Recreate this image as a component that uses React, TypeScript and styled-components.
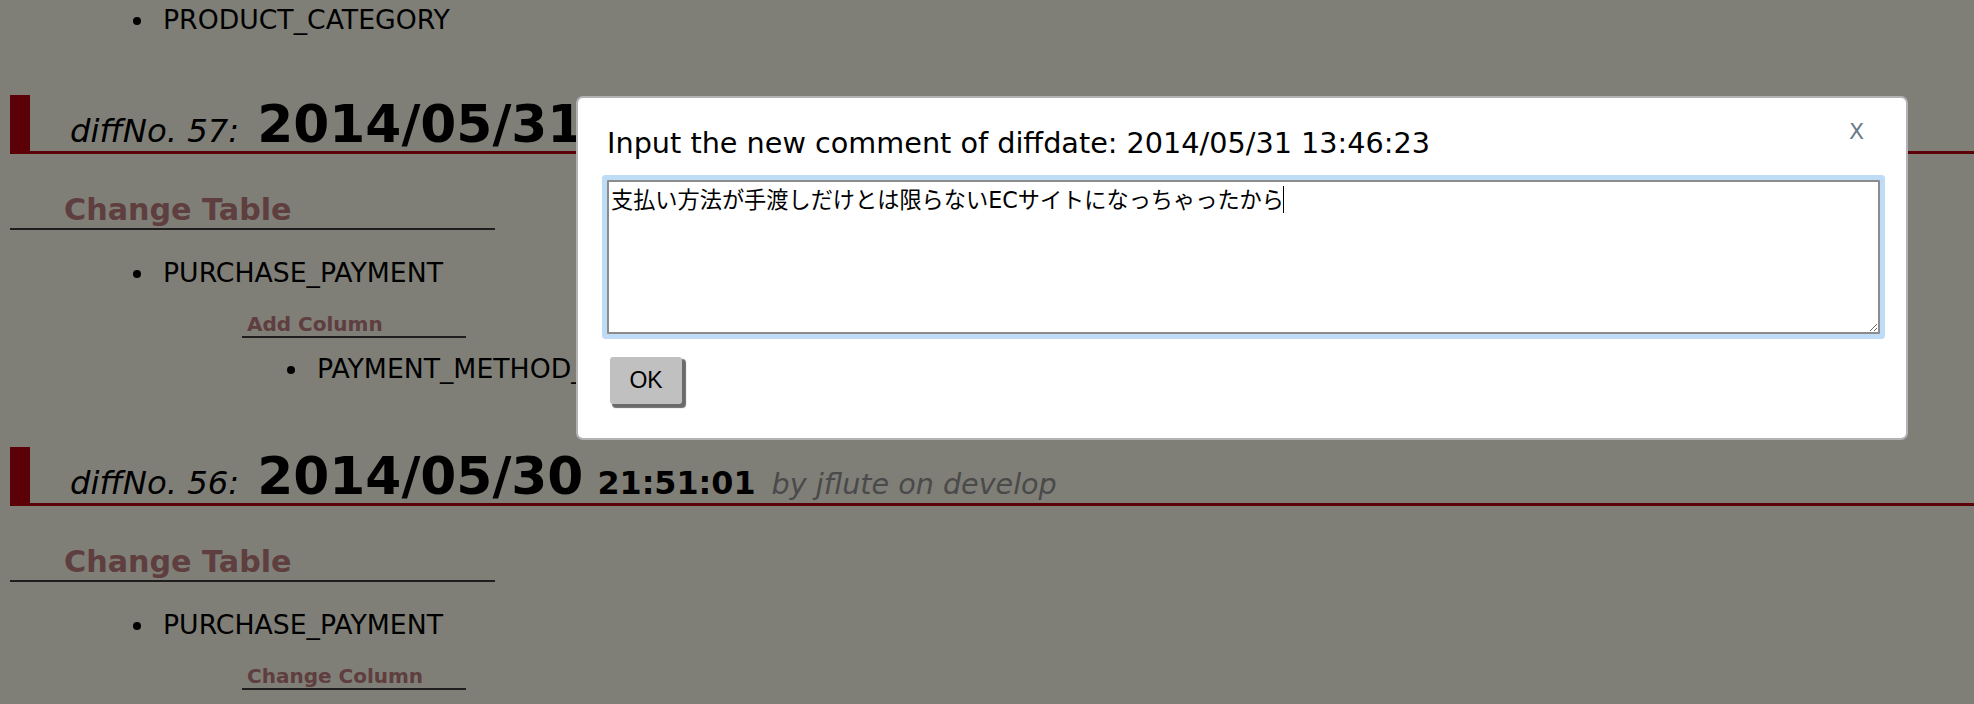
import React from 'react'
import styled, { createGlobalStyle } from 'styled-components'

const GlobalStyle = createGlobalStyle`
  html, body {
    margin: 0;
    height: 100%;
    overflow: hidden;
  }
  body {
    background: #fffef0;
    color: #000;
    font-family: "DejaVu Sans", "Noto Sans CJK JP", sans-serif;
  }
`

const Page = styled.div`
  padding-top: 4px;
`

const List = styled.ul<{ $top?: number }>`
  margin: ${({ $top }) => $top || 0}px 0 0;
  padding: 0;
  list-style: none;
`

const Item = styled.li<{ $indent: number }>`
  display: flex;
  align-items: center;
  padding-left: ${({ $indent }) => $indent}px;
  font-size: 26.7px;
  line-height: 31px;

  &::before {
    content: '';
    flex: none;
    width: 8px;
    height: 8px;
    margin: 3px 22px 0 0;
    border-radius: 50%;
    background: #000;
  }
`

const DiffHeading = styled.h2<{ $top: number }>`
  display: flex;
  align-items: baseline;
  height: 55px;
  margin: ${({ $top }) => $top}px 0 0 10px;
  padding: 1px 0 0 40px;
  border-left: 20px solid #b80010;
  border-bottom: 3px solid #b80010;
  font-weight: normal;
  white-space: nowrap;

  & > span {
    line-height: 1.1;
  }
`

const DiffNo = styled.span`
  margin-right: 18px;
  font-size: 32.3px;
  font-style: italic;
`

const DiffDate = styled.span`
  margin-right: 14px;
  font-size: 51.8px;
  font-weight: bold;
`

const DiffTime = styled.span`
  margin-right: 16px;
  font-size: 31.8px;
  font-weight: bold;
`

const DiffAuthor = styled.span`
  font-size: 28.6px;
  font-style: italic;
  color: #949494;
`

const ChangeTitle = styled.h3`
  width: 431px;
  margin: 38px 0 0 10px;
  padding-left: 54px;
  border-bottom: 2px solid #3c3c3c;
  font-size: 30.2px;
  line-height: 36px;
  font-weight: bold;
  color: #bc7c7c;
`

const ColumnTitle = styled.h4`
  width: 219px;
  margin: 24px 0 0 242px;
  padding-left: 5px;
  border-bottom: 2px solid #3c3c3c;
  font-size: 20px;
  line-height: 24px;
  font-weight: bold;
  color: #bc7c7c;
`

const Backdrop = styled.div`
  position: fixed;
  inset: 0;
  background: rgba(0, 0, 0, 0.5);
`

const Dialog = styled.div`
  position: fixed;
  left: 576px;
  top: 96px;
  width: 1332px;
  box-sizing: border-box;
  padding: 28px 26px 34px 29px;
  background: #fff;
  border: 2px solid #b3b3b3;
  border-radius: 7px;
`

const DialogTitle = styled.div`
  font-size: 28.7px;
  line-height: 34px;
`

const CloseButton = styled.button`
  position: absolute;
  top: 23px;
  right: 42px;
  padding: 0;
  border: 0;
  background: none;
  font: 22px/22px "DejaVu Sans", sans-serif;
  color: #6b7b8b;
`

const Field = styled.div`
  position: relative;
  margin-top: 20px;
`

const CommentBox = styled.textarea`
  display: block;
  box-sizing: border-box;
  width: 1273px;
  height: 154px;
  margin: 0;
  padding: 4px 2px 2px;
  border: 2px solid #8c8c8c;
  border-radius: 1px;
  outline: none;
  box-shadow: 0 0 0 5px #bfdcf7;
  font: 22.2px/28px "DejaVu Sans", "Noto Sans CJK JP", sans-serif;
  color: #000;
  caret-color: transparent;
`

const Caret = styled.span`
  position: absolute;
  left: 676px;
  top: 6px;
  width: 1px;
  height: 27px;
  background: #000;
`

const OkButton = styled.button`
  display: block;
  width: 72px;
  height: 47px;
  margin: 23px 0 0 3px;
  padding: 0;
  border: 0;
  border-radius: 3px;
  background: #c0c0c0;
  box-shadow: 3px 3px 1px 1px #6a6a6a;
  font: 23px "Liberation Sans", Arial, sans-serif;
  color: #000;
`

const diffs = [
  {
    no: 57,
    date: '2014/05/31',
    time: '13:46:23',
    author: 'by jflute on develop',
    tables: [{ name: 'PURCHASE_PAYMENT', change: 'Add Column', columns: ['PAYMENT_METHOD_CODE'] }],
  },
  {
    no: 56,
    date: '2014/05/30',
    time: '21:51:01',
    author: 'by jflute on develop',
    tables: [{ name: 'PURCHASE_PAYMENT', change: 'Change Column', columns: ['PAYMENT_AMOUNT'] }],
  },
]

const comment = '支払い方法が手渡しだけとは限らないECサイトになっちゃったから'

const App: React.FC = () => {
  return (
    <>
      <GlobalStyle />
      <Page>
        <List>
          <Item $indent={133}>PRODUCT_CATEGORY</Item>
        </List>
        {diffs.map((diff, i) => (
          <section key={diff.no}>
            <DiffHeading $top={i === 0 ? 60 : 63}>
              <DiffNo>diffNo. {diff.no}:</DiffNo>
              <DiffDate>{diff.date}</DiffDate>
              <DiffTime>{diff.time}</DiffTime>
              <DiffAuthor>{diff.author}</DiffAuthor>
            </DiffHeading>
            <ChangeTitle>Change Table</ChangeTitle>
            {diff.tables.map((table) => (
              <React.Fragment key={table.name}>
                <List $top={27}>
                  <Item $indent={133}>{table.name}</Item>
                </List>
                <ColumnTitle>{table.change}</ColumnTitle>
                <List $top={15}>
                  {table.columns.map((col) => (
                    <Item key={col} $indent={287}>{col}</Item>
                  ))}
                </List>
              </React.Fragment>
            ))}
          </section>
        ))}
      </Page>
      <Backdrop />
      <Dialog>
        <DialogTitle>Input the new comment of diffdate: 2014/05/31 13:46:23</DialogTitle>
        <CloseButton>X</CloseButton>
        <Field>
          <CommentBox defaultValue={comment} />
          <Caret />
        </Field>
        <OkButton>OK</OkButton>
      </Dialog>
    </>
  )
}

export default App
